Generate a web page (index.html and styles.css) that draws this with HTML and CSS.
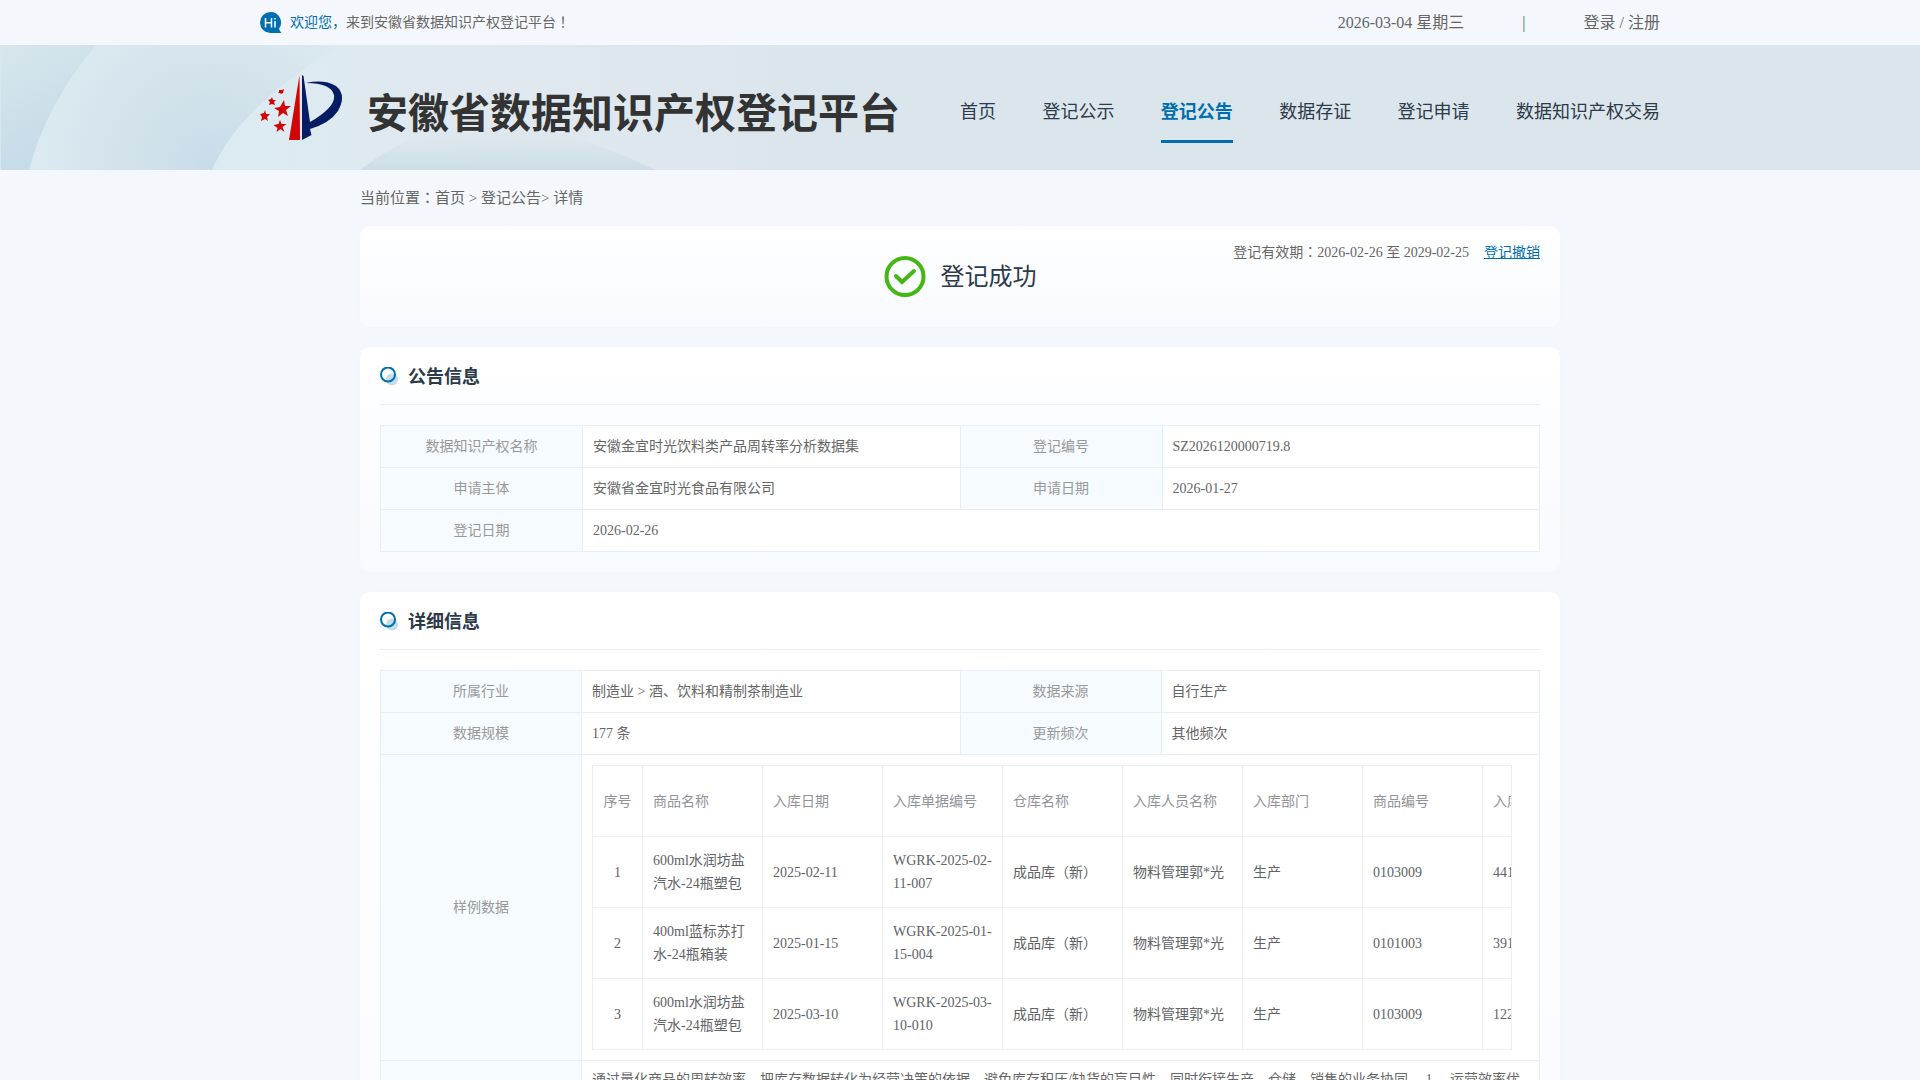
FILE: index.html
```html
<!DOCTYPE html>
<html lang="zh-CN">
<head>
<meta charset="UTF-8">
<title>安徽省数据知识产权登记平台</title>
<link rel="stylesheet" href="styles.css">
</head>
<body>
<div class="topbar">
  <div class="wide topbar-inner">
    <svg class="hi" viewBox="0 0 22 22" aria-hidden="true"><path d="M10.500 0a10.500 10.500 0 0 1 8.500 16.700q.8 2.600 2.500 4.300H10.500A10.500 10.500 0 0 1 10.500 0z" fill="#006eaf"/><path d="M5.500 6v9.500M11.500 6v9.500M5.500 10.800H11.500M15 9v6.500M15 6v1.500" stroke="#fff" stroke-width="1.500" fill="none"/></svg>
    <span class="welcome"><span class="hello">欢迎您，</span>来到安徽省数据知识产权登记平台<span class="mark" lang="zh-TW">！</span></span>
    <span>2026-03-04 星期三</span>
    <span class="bar">|</span>
    <span><a href="#">登录</a> / <a href="#">注册</a></span>
  </div>
</div>
<header class="header">
  <svg class="waves" viewBox="0 0 780 125" aria-hidden="true">
    <defs>
      <linearGradient id="w1" gradientUnits="userSpaceOnUse" x1="0" y1="0" x2="60" y2="110"><stop offset="0" stop-color="#d8e6ec"/><stop offset="1" stop-color="#c4dbe8"/></linearGradient>
      <radialGradient id="w2" gradientUnits="userSpaceOnUse" cx="210" cy="120" r="180"><stop offset="0" stop-color="#c8dce8"/><stop offset="0.500" stop-color="#d4e3eb"/><stop offset="1" stop-color="#dcebf2"/></radialGradient>
      <linearGradient id="w3" gradientUnits="userSpaceOnUse" x1="220" y1="0" x2="780" y2="0"><stop offset="0" stop-color="#dcebf2"/><stop offset="0.400" stop-color="#dfe9ef"/><stop offset="0.800" stop-color="#dee7ed"/><stop offset="1" stop-color="#dbe6ec"/></linearGradient>
      <linearGradient id="w4" x1="0" y1="0" x2="0" y2="1"><stop offset="0" stop-color="#dbe6ec" stop-opacity="0"/><stop offset="1" stop-color="#cbdde6"/></linearGradient>
    </defs>
    <rect x="1" width="779" height="125" fill="url(#w1)"/>
    <path d="M96 0Q46 60 29 125H780V0z" fill="url(#w2)"/>
    <path d="M342 0Q240 60 212 125H780V0z" fill="url(#w3)"/>
    <path d="M360 125Q420 78 490 78T655 125z" fill="url(#w4)"/>
  </svg>
  <div class="wide header-inner">
    <svg class="logo" viewBox="0 0 84 68" aria-hidden="true">
      <path d="M39.500 1L40 66H29z" fill="#cf0508"/>
      <path d="M42 1L43.500 2 50 48Q76 33 74 21 71 9 46 9 64 5 76 12 87 21 78 37 70 49 50 55L51.500 61 42 66z" fill="#061c63"/>
      <g fill="#cf0508"><path d="M24 26l1 6 6 0-5 4 2 6-5-3-5 4 1-6-5-3 6-1z"/><path d="M20 46l1.500 4 5 0-4 3 2 5-4-3-4 3 1-4-4-3 5-1z"/><path d="M5 36l1 4 4 0-3 3 1 4-3-2-4 2 1-4-2-3 4-1z"/><path d="M12 23l1 3 3 0-2 2 1 3-3-1-3 1 1-3-2-2 3-1z"/><path d="M24 15l-2 1h-3l0 2-1 1 2 0 1 1 2-1z"/></g>
    </svg>
    <h1 class="site">安徽省数据知识产权登记平台</h1>
    <nav class="nav">
      <a href="#">首页</a><a href="#">登记公示</a><a href="#" class="on">登记公告</a><a href="#">数据存证</a><a href="#">登记申请</a><a href="#">数据知识产权交易</a>
    </nav>
  </div>
</header>
<main class="main">
  <div class="crumb">当前位置<span class="mark" lang="zh-TW">：</span><a href="#">首页</a> &gt; <a href="#">登记公告</a>&gt; 详情</div>
  <section class="card status">
    <svg class="ok" viewBox="0 0 42 42" aria-hidden="true"><circle cx="21" cy="20.500" r="18.500" fill="none" stroke="#43b713" stroke-width="4"/><path d="M12 20l6 6 12-11" fill="none" stroke="#43b713" stroke-width="4" stroke-linecap="round"/></svg>
    <span class="ok-text">登记成功</span>
    <div class="valid"><span>登记有效期<span class="mark" lang="zh-TW">：</span>2026-02-26 至 2029-02-25</span><a href="#">登记撤销</a></div>
  </section>
  <section class="card">
    <h2><svg class="dot" viewBox="0 0 19 20" aria-hidden="true"><circle cx="12" cy="12.500" r="6" fill="#c4ddec"/><circle cx="8" cy="7.500" r="7" fill="none" stroke="#006eaf" stroke-width="2"/></svg>公告信息</h2>
    <table class="info">
      <colgroup><col class="k"><col class="v"><col class="k"><col class="v"></colgroup>
      <tr><th>数据知识产权名称</th><td>安徽金宜时光饮料类产品周转率分析数据集</td><th>登记编号</th><td>SZ2026120000719.8</td></tr>
      <tr><th>申请主体</th><td>安徽省金宜时光食品有限公司</td><th>申请日期</th><td>2026-01-27</td></tr>
      <tr><th>登记日期</th><td colspan="3">2026-02-26</td></tr>
    </table>
  </section>
  <section class="card">
    <h2><svg class="dot" viewBox="0 0 19 20" aria-hidden="true"><circle cx="12" cy="12.500" r="6" fill="#c4ddec"/><circle cx="8" cy="7.500" r="7" fill="none" stroke="#006eaf" stroke-width="2"/></svg>详细信息</h2>
    <table class="info detail">
      <colgroup><col class="k"><col class="v"><col class="k"><col class="v"></colgroup>
      <tr><th>所属行业</th><td>制造业 &gt; 酒、饮料和精制茶制造业</td><th>数据来源</th><td>自行生产</td></tr>
      <tr><th>数据规模</th><td>177 条</td><th>更新频次</th><td>其他频次</td></tr>
      <tr><th>样例数据</th><td colspan="3">
        <div class="scroll">
          <table class="sample">
            <colgroup><col class="n"><col><col><col><col><col><col><col><col></colgroup>
            <tr><th>序号</th><th>商品名称</th><th>入库日期</th><th>入库单据编号</th><th>仓库名称</th><th>入库人员名称</th><th>入库部门</th><th>商品编号</th><th>入库</th></tr>
            <tr><td>1</td><td>600ml水润坊盐汽水-24瓶塑包</td><td>2025-02-11</td><td>WGRK-2025-02-11-007</td><td>成品库（新）</td><td>物料管理郭*光</td><td>生产</td><td>0103009</td><td>441</td></tr>
            <tr><td>2</td><td>400ml蓝标苏打水-24瓶箱装</td><td>2025-01-15</td><td>WGRK-2025-01-15-004</td><td>成品库（新）</td><td>物料管理郭*光</td><td>生产</td><td>0101003</td><td>391</td></tr>
            <tr><td>3</td><td>600ml水润坊盐汽水-24瓶塑包</td><td>2025-03-10</td><td>WGRK-2025-03-10-010</td><td>成品库（新）</td><td>物料管理郭*光</td><td>生产</td><td>0103009</td><td>122</td></tr>
          </table>
        </div>
      </td></tr>
      <tr class="long"><th></th><td colspan="3">通过量化商品的周转效率，把库存数据转化为经营决策的依据，避免库存积压/缺货的盲目性，同时衔接生产、仓储、销售的业务协同。 1、 运营效率优</td></tr>
    </table>
  </section>
</main>
</body>
</html>
```
FILE: styles.css
```css
* { box-sizing: border-box; margin: 0; padding: 0; }
body {
  font: 14px/21px "Liberation Serif", "Noto Sans CJK SC", serif;
  color: #666;
  background: #f4f8fd;
}
a { color: inherit; text-decoration: none; }
.wide { max-width: 1400px; margin: 0 auto; }
/* centred full-width punctuation */
.mark { font-family: "Noto Sans CJK TC", sans-serif; line-height: 1; }

.topbar-inner {
  height: 45px;
  display: flex;
  align-items: center;
  font-size: 16px;
}
.hi { width: 22px; height: 22px; margin-right: 8px; }
.welcome { font-size: 14px; margin-right: auto; }
.hello { color: #006eaf; }
.bar { margin: 0 58px; }

.header { position: relative; background: #dbe6ec; }
.waves { position: absolute; left: 0; top: 0; width: 780px; height: 125px; }
.header-inner {
  position: relative;
  height: 125px;
  display: flex;
  align-items: center;
}
.logo { width: 84px; height: 68px; }
.site {
  margin-left: 23px;
  padding-top: 4px;
  font: bold 41px/60px "Noto Sans CJK SC", sans-serif;
  color: #333;
  white-space: nowrap;
}
.nav {
  width: 700px;
  margin-left: auto;
  padding-top: 12px;
  display: flex;
  justify-content: space-between;
  font-size: 18px;
  line-height: 56px;
  color: #2d3a4a;
}
.nav a { border-bottom: 3px solid transparent; }
.nav .on { color: #006eaf; font-weight: bold; border-color: #006eaf; }

.main { max-width: 1200px; margin: 0 auto; }
.crumb { font-size: 15px; line-height: 56px; }
.card {
  padding: 20px;
  margin-bottom: 20px;
  border-radius: 10px;
  background: linear-gradient(#fff, #f7faff);
  box-shadow: 0 0 10px rgba(0, 70, 110, 0.010);
}
.status {
  position: relative;
  height: 101px;
  display: flex;
  justify-content: center;
  align-items: center;
}
.ok { width: 42px; height: 42px; margin-right: 15px; }
.ok-text { font-size: 24px; line-height: 30px; color: #2d3a4a; }
.valid { position: absolute; top: 16px; right: 20px; display: flex; gap: 15px; }
.valid a { color: #006eaf; text-decoration: underline; }
h2 {
  display: flex;
  align-items: flex-start;
  padding-bottom: 17px;
  margin-bottom: 20px;
  border-bottom: 1px solid #ebeef0;
  font-size: 18px;
  line-height: 20px;
  color: #2d3a4a;
}
.dot { width: 19px; height: 20px; margin-right: 9px; }

table { border-collapse: collapse; table-layout: fixed; }
.info { width: 100%; background: #fff; }
.info .k { width: 202px; }
.detail .k { width: 201px; }
.info td, .info th { border: 1px solid #ebeef0; height: 42px; padding: 10px; text-align: left; }
.info th { background: #f6fbff; color: #999; font-weight: normal; text-align: center; }
.info .long td { height: 240px; padding-top: 8px; vertical-align: top; }

.scroll { width: 920px; max-width: 100%; overflow: hidden; border-right: 1px solid #ebeef5; }
.info .sample { width: 1011px; line-height: 23px; color: #606266; }
.sample .n { width: 50px; }
.info .sample td, .info .sample th { height: 71px; border-color: #ebeef5; vertical-align: middle; }
.info .sample th { background: #fff; color: #909399; text-align: left; }
.info .sample tr > :first-child { text-align: center; }
```
